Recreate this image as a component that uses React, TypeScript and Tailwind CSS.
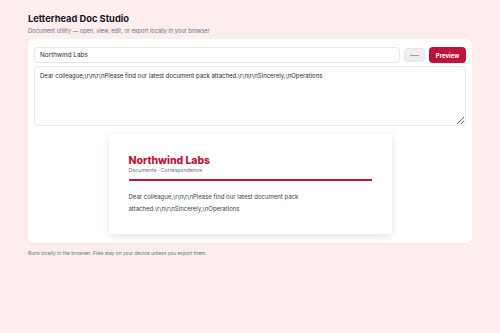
import { useState } from 'react';

const FONT = { fontFamily: 'Inter, "Noto Sans", sans-serif' };

export default function App() {
    const [name, setName] = useState('Northwind Labs');
    const [body, setBody] = useState('Dear colleague,\\r\\n\\r\\nPlease find our latest document pack attached.\\r\\n\\r\\nSincerely,\\nOperations');

    return (
        <div className="min-h-[333px] w-full bg-[#fdeded] px-[28px] pt-[12px] text-[#1f2937]" style={FONT}>
            <h1 className="text-[9.3px] font-bold leading-[14px] text-[#111827]">Letterhead Doc Studio</h1>
            <p className="mt-[1px] text-[5.6px] leading-[8px] text-[#6b7280]">
                Document utility — open, view, edit, or export locally in your browser
            </p>

            <div className="mt-[4px] rounded-[6px] bg-white px-[6px] pt-[8px] pb-[9px] shadow-[0_1px_2px_rgba(0,0,0,0.04)]">
                {/* Toolbar */}
                <div className="flex items-center gap-[4px]">
                    <input
                        value={name}
                        onChange={e => setName(e.target.value)}
                        className="h-[16px] flex-1 rounded-[4px] border border-[#e5e7eb] px-[5px] text-[6.4px] text-[#1f2937] outline-none"
                    />
                    <button className="flex h-[14px] w-[21px] items-center justify-center rounded-[4px] border border-[#e5e7eb] bg-[#eeeeee]">
                        <span className="block h-[1px] w-[9px] bg-[#9ca3af]" />
                    </button>
                    <button className="h-[16px] w-[37px] rounded-[4px] bg-[#be123c] text-[6px] font-bold text-white">
                        Preview
                    </button>
                </div>

                <textarea
                    value={body}
                    onChange={e => setBody(e.target.value)}
                    className="mt-[3px] block h-[60px] w-full resize-y rounded-[4px] border border-[#e5e7eb] px-[5px] py-[4px] text-[6px] leading-[9px] text-[#1f2937] outline-none"
                />

                {/* Letterhead preview */}
                <div className="mt-[8px] flex justify-center">
                    <div className="h-[100px] w-[283px] bg-white px-[20px] pt-[21px] shadow-[0_2px_8px_rgba(0,0,0,0.12)]">
                        <div className="text-[10.4px] font-extrabold leading-[12px] text-[#be123c]">{name}</div>
                        <div className="text-[5.2px] leading-[7px] text-[#6b7280]">Documents · Correspondence</div>
                        <div className="mt-[5px] h-[1.5px] bg-[#be123c]" />
                        <div className="mt-[10px] text-[6px] leading-[12px] text-[#374151]">{body}</div>
                    </div>
                </div>
            </div>

            <p className="mt-[7px] text-[4.9px] leading-[7px] text-[#6b7280]">
                Runs locally in the browser. Files stay on your device unless you export them.
            </p>
        </div>
    );
}
